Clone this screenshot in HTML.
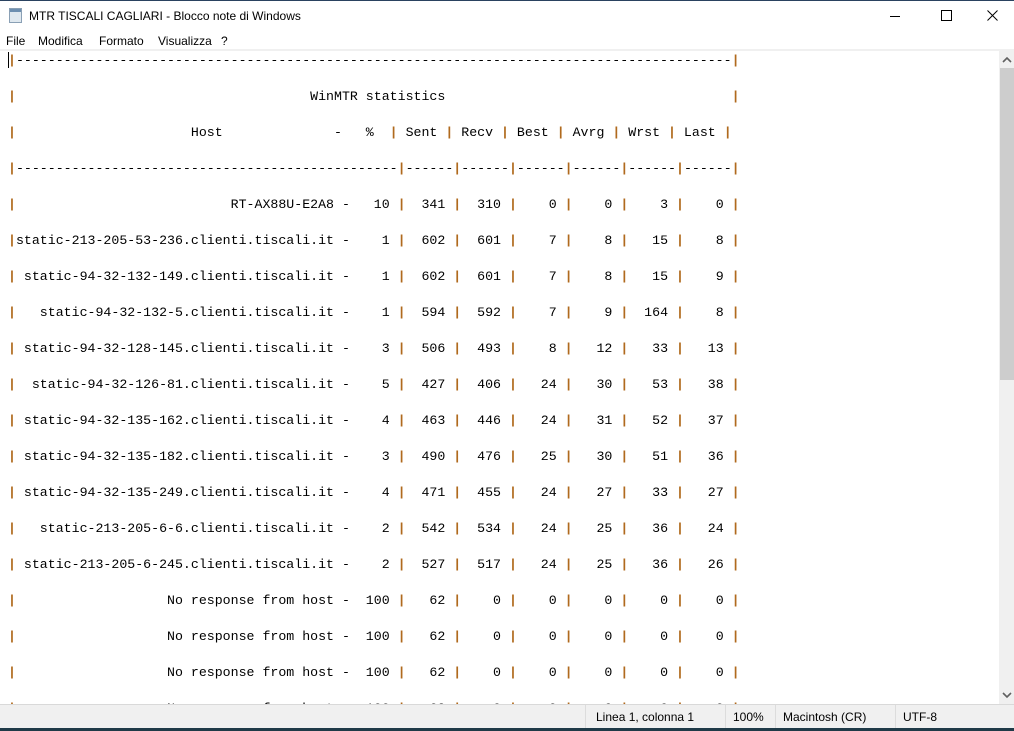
<!DOCTYPE html>
<html><head><meta charset="utf-8"><style>
html,body{margin:0;padding:0;width:1014px;height:731px;overflow:hidden;background:#fff;font-family:"Liberation Sans",sans-serif;}
#top{position:absolute;left:0;top:0;width:1014px;height:1px;background:#2a4260;}
#title{position:absolute;left:0;top:1px;width:1014px;height:29px;background:#fff;font-size:12px;color:#000;}
#title .t{position:absolute;left:29px;top:8px;}
#icon{position:absolute;left:9px;top:7px;width:13px;height:15px;background:#dfe8ef;border:1px solid #8aa0b5;box-sizing:border-box;}
#icon:before{content:"";position:absolute;left:0;top:0;right:0;height:3px;background:#6d8fb0;}
#menu{position:absolute;left:0;top:30px;width:1014px;height:20px;font-size:12px;}
#menu span{position:absolute;top:4px;}
#menuline{position:absolute;left:0;top:49px;width:1014px;height:2px;background:#f0f0f0;}
pre{position:absolute;left:8px;top:52px;margin:0;font-family:"Liberation Mono",monospace;font-size:13.25px;line-height:18px;color:#000;letter-spacing:0;}
pre b{font-weight:bold;color:#b06a1e;}
#sb{position:absolute;left:999px;top:51px;width:15px;height:653px;background:#f0f0f0;}
#thumb{position:absolute;left:1000px;top:68px;width:14px;height:312px;background:#cdcdcd;}
#status{position:absolute;left:0;top:704px;width:1014px;height:24px;background:#f0f0f0;border-top:1px solid #d9d9d9;box-sizing:border-box;font-size:12px;}
#status span{position:absolute;top:5px;}
#status i{position:absolute;top:0;width:1px;height:23px;background:#dcdcdc;}
#bot{position:absolute;left:0;top:728px;width:1014px;height:3px;background:#1f3a48;}
#caret{position:absolute;left:8px;top:52px;width:1px;height:16px;background:#000;}
</style></head><body>
<div id="top"></div>
<div id="title"><div id="icon"></div><span class="t">MTR TISCALI CAGLIARI - Blocco note di Windows</span>
<svg style="position:absolute;left:890px;top:9px" width="12" height="12"><line x1="0" y1="6.5" x2="10" y2="6.5" stroke="#000"/></svg>
<svg style="position:absolute;left:941px;top:9px" width="12" height="12"><rect x="0.5" y="0.5" width="10" height="10" fill="none" stroke="#000"/></svg>
<svg style="position:absolute;left:987px;top:9px" width="12" height="12"><path d="M0.5 0.5L10.5 10.5M10.5 0.5L0.5 10.5" stroke="#000"/></svg>
</div>
<div id="menu"><span style="left:6px">File</span><span style="left:38px">Modifica</span><span style="left:99px">Formato</span><span style="left:158px">Visualizza</span><span style="left:221px">?</span></div>
<div id="menuline"></div>
<pre><b>|</b>------------------------------------------------------------------------------------------<b>|</b>

<b>|</b>                                     WinMTR statistics                                    <b>|</b>

<b>|</b>                      Host              -   %  <b>|</b> Sent <b>|</b> Recv <b>|</b> Best <b>|</b> Avrg <b>|</b> Wrst <b>|</b> Last <b>|</b>

<b>|</b>------------------------------------------------<b>|</b>------<b>|</b>------<b>|</b>------<b>|</b>------<b>|</b>------<b>|</b>------<b>|</b>

<b>|</b>                           RT-AX88U-E2A8 -   10 <b>|</b>  341 <b>|</b>  310 <b>|</b>    0 <b>|</b>    0 <b>|</b>    3 <b>|</b>    0 <b>|</b>

<b>|</b>static-213-205-53-236.clienti.tiscali.it -    1 <b>|</b>  602 <b>|</b>  601 <b>|</b>    7 <b>|</b>    8 <b>|</b>   15 <b>|</b>    8 <b>|</b>

<b>|</b> static-94-32-132-149.clienti.tiscali.it -    1 <b>|</b>  602 <b>|</b>  601 <b>|</b>    7 <b>|</b>    8 <b>|</b>   15 <b>|</b>    9 <b>|</b>

<b>|</b>   static-94-32-132-5.clienti.tiscali.it -    1 <b>|</b>  594 <b>|</b>  592 <b>|</b>    7 <b>|</b>    9 <b>|</b>  164 <b>|</b>    8 <b>|</b>

<b>|</b> static-94-32-128-145.clienti.tiscali.it -    3 <b>|</b>  506 <b>|</b>  493 <b>|</b>    8 <b>|</b>   12 <b>|</b>   33 <b>|</b>   13 <b>|</b>

<b>|</b>  static-94-32-126-81.clienti.tiscali.it -    5 <b>|</b>  427 <b>|</b>  406 <b>|</b>   24 <b>|</b>   30 <b>|</b>   53 <b>|</b>   38 <b>|</b>

<b>|</b> static-94-32-135-162.clienti.tiscali.it -    4 <b>|</b>  463 <b>|</b>  446 <b>|</b>   24 <b>|</b>   31 <b>|</b>   52 <b>|</b>   37 <b>|</b>

<b>|</b> static-94-32-135-182.clienti.tiscali.it -    3 <b>|</b>  490 <b>|</b>  476 <b>|</b>   25 <b>|</b>   30 <b>|</b>   51 <b>|</b>   36 <b>|</b>

<b>|</b> static-94-32-135-249.clienti.tiscali.it -    4 <b>|</b>  471 <b>|</b>  455 <b>|</b>   24 <b>|</b>   27 <b>|</b>   33 <b>|</b>   27 <b>|</b>

<b>|</b>   static-213-205-6-6.clienti.tiscali.it -    2 <b>|</b>  542 <b>|</b>  534 <b>|</b>   24 <b>|</b>   25 <b>|</b>   36 <b>|</b>   24 <b>|</b>

<b>|</b> static-213-205-6-245.clienti.tiscali.it -    2 <b>|</b>  527 <b>|</b>  517 <b>|</b>   24 <b>|</b>   25 <b>|</b>   36 <b>|</b>   26 <b>|</b>

<b>|</b>                   No response from host -  100 <b>|</b>   62 <b>|</b>    0 <b>|</b>    0 <b>|</b>    0 <b>|</b>    0 <b>|</b>    0 <b>|</b>

<b>|</b>                   No response from host -  100 <b>|</b>   62 <b>|</b>    0 <b>|</b>    0 <b>|</b>    0 <b>|</b>    0 <b>|</b>    0 <b>|</b>

<b>|</b>                   No response from host -  100 <b>|</b>   62 <b>|</b>    0 <b>|</b>    0 <b>|</b>    0 <b>|</b>    0 <b>|</b>    0 <b>|</b>

<b>|</b>                   No response from host -  100 <b>|</b>   62 <b>|</b>    0 <b>|</b>    0 <b>|</b>    0 <b>|</b>    0 <b>|</b>    0 <b>|</b></pre>
<div id="caret"></div>
<div id="sb"></div><div id="thumb"></div>
<svg style="position:absolute;left:1002px;top:56px" width="10" height="8"><path d="M1 6L5 2L9 6" stroke="#606060" stroke-width="1.6" fill="none"/></svg>
<svg style="position:absolute;left:1002px;top:691px" width="10" height="8"><path d="M1 2L5 6L9 2" stroke="#606060" stroke-width="1.6" fill="none"/></svg>
<div id="status">
<i style="left:585px"></i><i style="left:725px"></i><i style="left:775px"></i><i style="left:895px"></i>
<span style="left:596px">Linea 1, colonna 1</span>
<span style="left:733px">100%</span>
<span style="left:783px">Macintosh (CR)</span>
<span style="left:903px">UTF-8</span>
</div>
<div id="bot"></div>
</body></html>
